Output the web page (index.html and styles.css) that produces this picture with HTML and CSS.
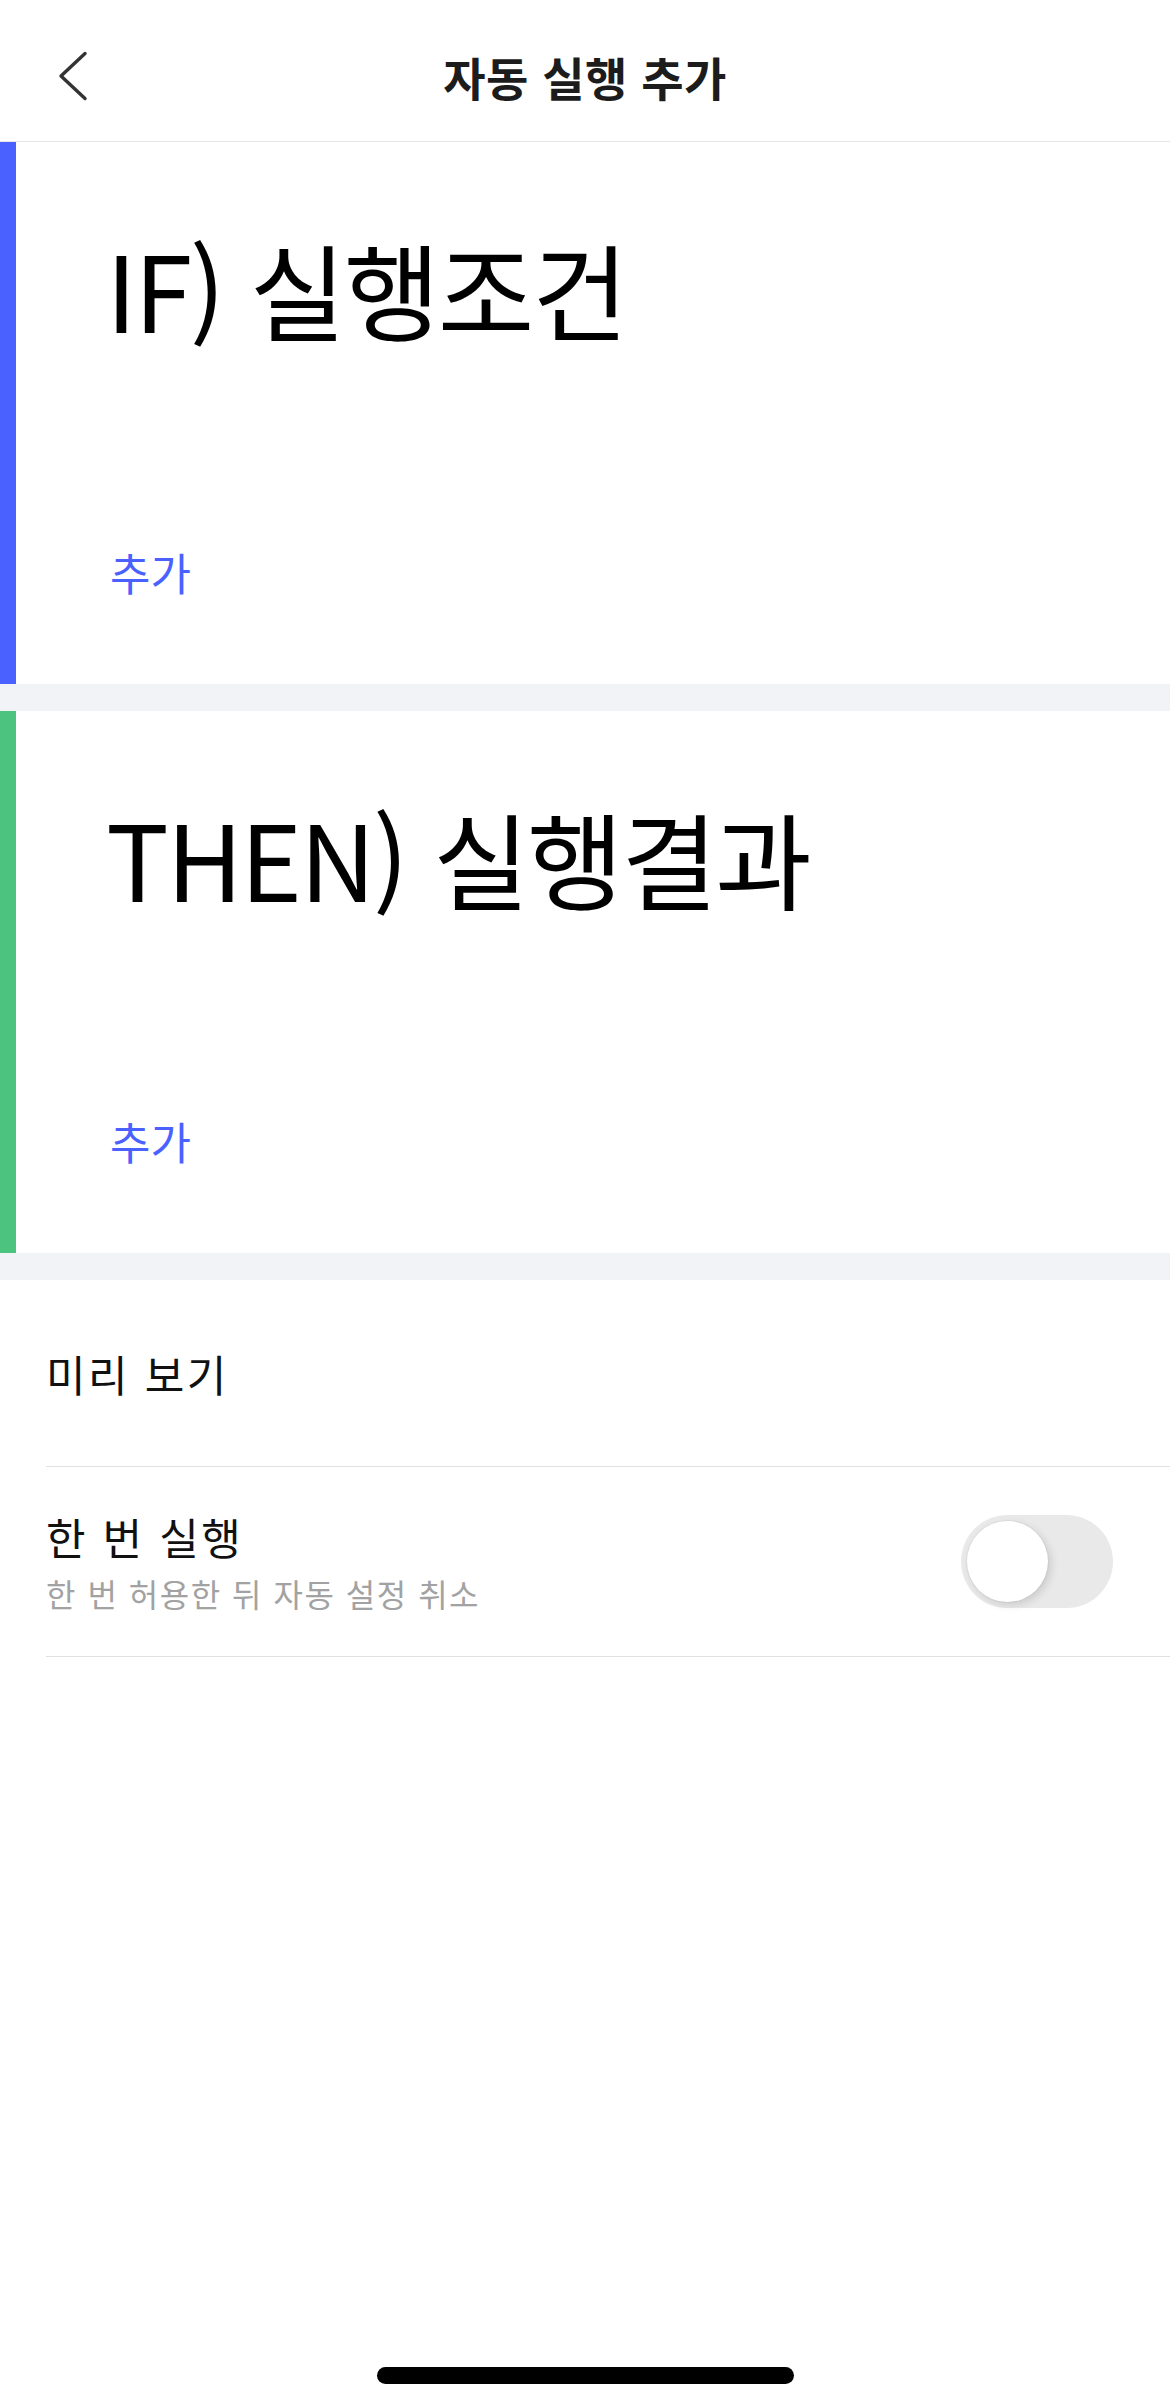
FILE: index.html
```html
<!DOCTYPE html>
<html lang="ko">
<head>
<meta charset="utf-8">
<title>자동 실행 추가</title>
<link rel="stylesheet" href="styles.css">
</head>
<body>
<div class="page">
  <header class="topbar">
    <div class="back">
      <svg width="30" height="50" viewBox="0 0 30 50" aria-hidden="true">
        <path d="M27 2.5 L3 25 L27 47.5" fill="none" stroke="#333" stroke-width="3.4" stroke-linecap="round" stroke-linejoin="round"/>
      </svg>
    </div>
    <h1 class="title">자동 실행 추가</h1>
    <div></div>
  </header>

  <section class="block block-if">
    <div class="bar"></div>
    <div class="block-body">
      <div class="block-title">IF) 실행조건</div>
      <div class="add">추가</div>
    </div>
  </section>
  <div class="gap"></div>
  <section class="block block-then">
    <div class="bar"></div>
    <div class="block-body">
      <div class="block-title">THEN) 실행결과</div>
      <div class="add">추가</div>
    </div>
  </section>
  <div class="gap"></div>

  <div class="list">
    <div class="row row-preview">
      <div class="row-label">미리 보기</div>
    </div>
    <div class="row row-once">
      <div class="row-text">
        <div class="row-label">한 번 실행</div>
        <div class="row-sub">한 번 허용한 뒤 자동 설정 취소</div>
      </div>
      <div class="toggle"><div class="knob"></div></div>
    </div>
  </div>

  <div class="home"></div>
</div>
</body>
</html>
```

FILE: styles.css
```css
* { box-sizing: border-box; }
html, body { margin: 0; padding: 0; background: #fff; }
body {
  font-family: "Noto Sans CJK KR", "Noto Sans", sans-serif;
  color: #000;
}
.page {
  width: 1170px;
  min-height: 2400px;
  display: flex;
  flex-direction: column;
}
.topbar {
  height: 142px;
  border-bottom: 1px solid #e6e6e6;
  display: grid;
  grid-template-columns: 1fr auto 1fr;
  align-items: center;
  padding-top: 10px;
}
.back {
  padding-left: 58px;
  display: flex;
  align-items: center;
}
.title {
  margin: 0;
  font-size: 46px;
  font-weight: 700;
  color: #1c1c1c;
  line-height: 1;
  letter-spacing: 0.5px;
}
.block {
  display: flex;
  height: 542px;
  background: #fff;
}
.bar { width: 16px; flex: none; }
.block-if .bar { background: #4a60ff; }
.block-then .bar { background: #4cc47f; }
.block-body {
  padding: 93px 0 0 90px;
  display: flex;
  flex-direction: column;
}
.block-title {
  font-size: 105px;
  line-height: 1;
  color: #000;
  letter-spacing: -2.5px;
}
.add {
  margin-top: 210px;
  font-size: 44px;
  line-height: 1;
  color: #4a60ff;
  margin-left: 4px;
}
.gap {
  height: 27px;
  background: #f2f3f7;
}
.list { padding-left: 46px; }
.row {
  display: flex;
  align-items: center;
  border-bottom: 1px solid #e1e1e1;
}
.row-preview { height: 187px; }
.row-once {
  height: 190px;
  justify-content: space-between;
  padding-right: 57px;
}
.row-label {
  font-size: 43px;
  line-height: 1;
  color: #111;
  letter-spacing: 2.5px;
}
.row-text {
  display: flex;
  flex-direction: column;
  gap: 19px;
}
.row-sub {
  font-size: 32px;
  line-height: 1;
  color: #a2a2a2;
  letter-spacing: 1.5px;
}
.toggle {
  width: 152px;
  height: 93px;
  border-radius: 47px;
  background: #e9e9ea;
  display: flex;
  align-items: center;
  padding-left: 6px;
}
.knob {
  width: 81px;
  height: 81px;
  border-radius: 50%;
  background: #fff;
  box-shadow: 0 0 0 1px rgba(0,0,0,0.04), 3px 3px 8px rgba(0,0,0,0.13);
}
.home {
  margin: auto auto 16px;
  width: 417px;
  height: 17px;
  border-radius: 9px;
  background: #000;
}
```
